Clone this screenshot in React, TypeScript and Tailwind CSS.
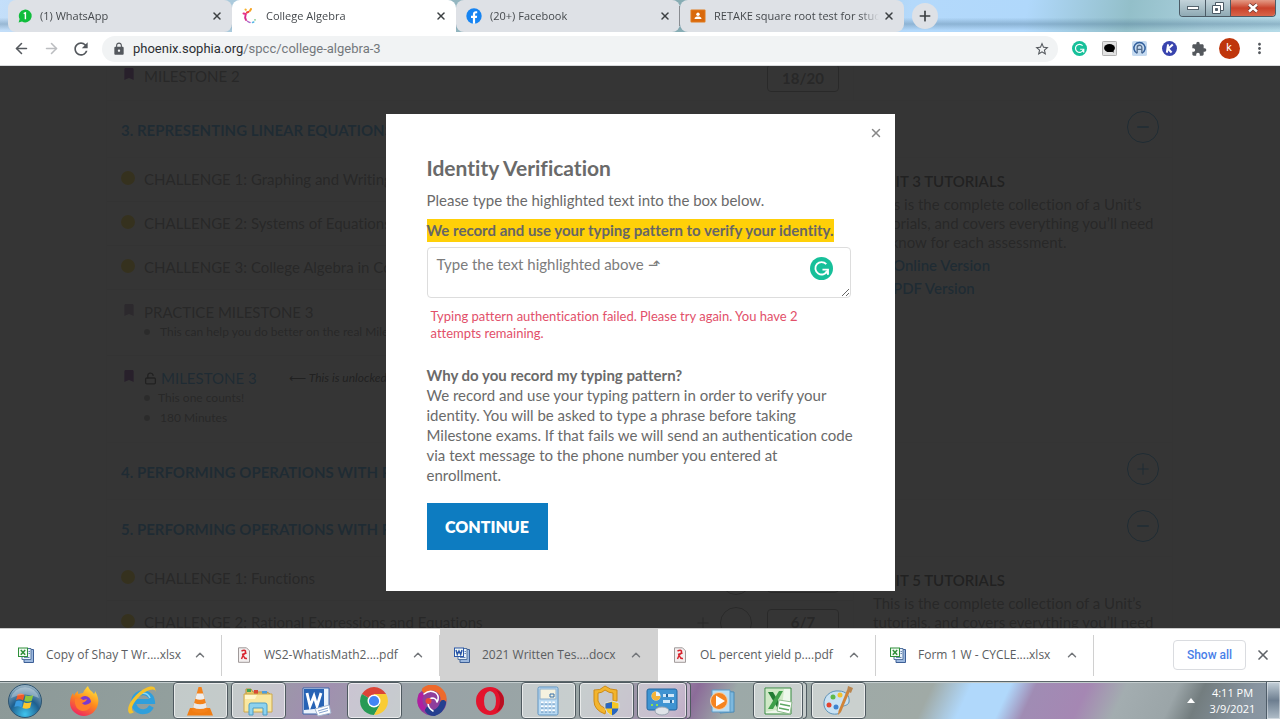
import type { ReactNode } from 'react'
import { ArrowLeft, ArrowRight, ChevronUp, Minus, Plus, Unlock, X } from 'lucide-react'
import { MdBookmark, MdExtension, MdLock, MdMoreVert, MdRefresh, MdStarBorder } from 'react-icons/md'

interface Tab {
  title: string
  icon: ReactNode
  active?: boolean
}

interface Download {
  name: string
  kind: 'excel' | 'pdf' | 'word'
  active?: boolean
}

interface TaskItem {
  label: string
  icon: ReactNode
  open?: boolean
  stacked?: boolean
}

/* ---------- small icons ---------- */

const WhatsAppIcon = () => (
  <svg viewBox="0 0 14 14" className="size-3.5 shrink-0">
    <path d="M.6 13.4l1-3.4A6.4 6.4 0 1 1 4 12.5z" fill="#10bd3c" />
    <path d="M5.7 4.7L7.4 3.8v6.4" fill="none" stroke="#fff" strokeWidth="1.4" />
  </svg>
)

const SophiaIcon = () => (
  <svg viewBox="0 0 16 16" className="size-4 shrink-0" fill="none" strokeWidth="2" strokeLinecap="round">
    <path d="M3.500 1.500l.3.300" stroke="#f7b32b" />
    <path d="M9 1l-1 1.800" stroke="#f5a220" />
    <path d="M6.500 3.800L5 4.500" stroke="#ee4a3b" />
    <path d="M1.500 5.500L4 6" stroke="#e8308a" />
    <path d="M3.500 7.500Q2.500 10 4 12" stroke="#d82a8c" />
    <path d="M5.500 13.200Q7 14.500 8 14.500" stroke="#b06ac8" strokeWidth="1.500" />
    <path d="M10.500 14.500L11.800 14" stroke="#56b7e6" strokeWidth="1.500" />
    <path d="M13 12v-.3" stroke="#6fc17a" strokeWidth="1.500" />
  </svg>
)

const FacebookIcon = () => (
  <svg viewBox="0 0 16 16" className="size-4 shrink-0">
    <circle cx="8" cy="8" r="7.700" fill="#1684f2" />
    <path d="M6.900 15.700V10H5V7.800h1.900V6.200c0-2 1.200-3 2.900-3 .8 0 1.400.1 1.400.1v1.900h-.9c-.9 0-1.200.5-1.200 1.100v1.500h2.100L10.800 10H9.100v5.700z" fill="#fff" />
  </svg>
)

const ClassroomIcon = () => (
  <svg viewBox="0 0 16 16" className="size-4 shrink-0">
    <rect x=".5" y="1.500" width="15" height="13" rx="1" fill="#e07b1c" />
    <rect x="1.500" y="2.500" width="13" height="11" fill="#d9690c" />
    <circle cx="8" cy="6.300" r="1.700" fill="#fff" />
    <path d="M4.500 11c0-2 2-2.500 3.500-2.500s3.500.5 3.500 2.500z" fill="#fff" />
  </svg>
)

const GrammarlyIcon = ({ className }: { className: string }) => (
  <svg viewBox="0 0 24 24" className={className}>
    <circle cx="12" cy="12" r="12" fill="#17c09a" />
    <path d="M17 7.500A6.500 6.500 0 1 0 18 14.500" fill="none" stroke="#fff" strokeWidth="1.900" />
    <path d="M13 13.200h5.800V18.500" fill="none" stroke="#fff" strokeWidth="1.900" />
    <path d="M18.800 13.200v5.500l-3-3z" fill="#fff" />
  </svg>
)

const FileIcon = ({ kind }: { kind: Download['kind'] }) => {
  if (kind === 'pdf') {
    return (
      <svg viewBox="0 0 16 16" className="size-4 shrink-0">
        <path d="M2.500.8h8l3 3v11.500h-11z" fill="#f3efef" stroke="#a09a9a" />
        <path d="M5.500 4q3-1.500 4 0 .5 2-2.500 4.500L5.500 12M6 7.500l4.500-1.500M7.500 9q1 3 3.500 2.500" fill="none" stroke="#d8232e" strokeWidth="1.400" />
      </svg>
    )
  }
  const color = kind === 'excel' ? '#2f8f3a' : '#2b56a8'
  return (
    <svg viewBox="0 0 16 16" className="size-4 shrink-0">
      <path d="M6 2.500h9.500v13H6z" fill="#9cb8de" stroke="#3d5f96" />
      <path d="M4 1.500h9v11H4z" fill="#e8f1fb" stroke="#54749f" />
      <path d="M10.500 4.500h1.500M10.500 6.500h1.500M6 10.500h5.500" stroke="#6b88b5" />
      <rect x=".5" y="1" width="9" height="8.500" fill="#f4fbf4" stroke={color} />
      <path
        d={kind === 'excel' ? 'M2.800 3l4.400 4.800M7.200 3L2.800 7.800' : 'M2 3l1.300 4.500L5 4l1.700 3.500L8 3'}
        fill="none"
        stroke={color}
        strokeWidth="1.500"
      />
    </svg>
  )
}

/* ---------- taskbar icons ---------- */

const StartOrb = () => (
  <svg viewBox="0 0 36 36" className="size-9">
    <defs>
      <radialGradient id="orb" cx=".5" cy=".9" r=".9">
        <stop offset="0" stopColor="#3fc4ee" />
        <stop offset=".5" stopColor="#1f5f8f" />
        <stop offset="1" stopColor="#9fb7c6" />
      </radialGradient>
    </defs>
    <circle cx="18" cy="18" r="16.500" fill="url(#orb)" stroke="#2f5570" />
    <path d="M10.500 11.500c2.500-1.500 4.500-1 7 .3l-1.400 5.700c-2.400-1.300-4.500-1.600-7-.3z" fill="#ef5a28" />
    <path d="M18.600 12.200c2.500 1.200 5 1.200 7.600-.2l-1.400 5.700c-2.500 1.300-5 1.400-7.600.3z" fill="#8cc63e" />
    <path d="M8.800 18.400c2.500-1.300 4.500-1 7 .3l-1.400 5.700c-2.400-1.300-4.600-1.600-7-.3z" fill="#3a9be0" />
    <path d="M16.900 19.200c2.500 1.200 5 1.200 7.600-.2l-1.400 5.700c-2.500 1.300-5 1.400-7.600.3z" fill="#fcc72c" />
    <path d="M4 15a14.500 14.500 0 0 1 28 0Q18 8 4 15z" fill="#fff" opacity=".3" />
  </svg>
)

const FirefoxIcon = () => (
  <svg viewBox="0 0 32 32" className="size-8">
    <defs>
      <linearGradient id="fx" x1=".8" y1="0" x2=".3" y2="1">
        <stop offset="0" stopColor="#ffe83e" />
        <stop offset=".5" stopColor="#ff8a1c" />
        <stop offset="1" stopColor="#ee2462" />
      </linearGradient>
    </defs>
    <path d="M20 1c1 4 4 5 6 8 1-1 1-2 1-3 3 5 4 9 3 13-1.500 7-7 12-14 12S2 25.500 2 18c0-4 1-7 3-10l1 3c1-3 3-4 4-5v3l5-1c1-3 3-5 5-7z" fill="url(#fx)" />
    <circle cx="17" cy="17" r="6" fill="#7a3ad0" />
    <path d="M7 14c4-2 6-1 8 1l4-1c-1 3-3 3-5 4 2 3 6 2 9-1 1 6-4 9-8 9-5 0-9-5-8-12z" fill="#ff7f2a" />
  </svg>
)

const ExplorerIcon = () => (
  <svg viewBox="0 0 32 32" className="size-8" fill="none">
    <path d="M25.500 21.500A9.500 9.500 0 1 1 26.500 16.500H10" stroke="#2f9fdc" strokeWidth="5" />
    <path d="M24 13A7.500 7.500 0 0 0 10 13" stroke="#8cd6f6" strokeWidth="1.500" />
    <path d="M3 28C-1 22 9 8 20 3c6-2.500 10-2 9.500 4C29 2 20 5 13 12 6 19 4 25 8 27c-2 1.500-4 2-5 1z" fill="#f5c22c" />
  </svg>
)

const VlcIcon = () => (
  <svg viewBox="0 0 32 32" className="size-8">
    <path d="M6 23h20l3 7.500H3z" fill="#f07c12" />
    <path d="M14.500 2h3L24 26q-8 4-16 0z" fill="#f4821a" />
    <path d="M12.800 8.500h6.400l1.500 5.300q-4.700 2-9.400 0z" fill="#eee" />
    <path d="M10.200 18q5.800 2.500 11.600 0l1.200 4.500q-7 3-14 0z" fill="#e9e9e9" />
  </svg>
)

const FolderIcon = () => (
  <svg viewBox="0 0 32 32" className="size-8">
    <path d="M4 4h5l2 3h14l3 2v17H4z" fill="#e8c766" stroke="#b8913a" />
    <path d="M5 4h4v3H5z" fill="#3fa352" />
    <path d="M12 5h4v4h-4z" fill="#d94a34" />
    <path d="M20 6h5v3h-5z" fill="#4a9de0" />
    <path d="M2 9h28v18H2z" fill="#f9e7a0" stroke="#cda84d" />
    <path d="M3 10h12l-2 4H3z" fill="#fff7ce" />
    <path d="M7 30V20q0-2 2-2h14q2 0 2 2v10h-4v-7H11v7z" fill="#8ed2ee" stroke="#4c9dc6" />
  </svg>
)

const WordIcon = () => (
  <svg viewBox="0 0 32 32" className="size-8">
    <path d="M3 3h26v26H3z" fill="#eaf2fc" stroke="#3a65ab" />
    <path d="M4 4h20v19L4 25z" fill="#2763b5" />
    <path d="M7 8l3 13 4-10 3 10 4-13" fill="none" stroke="#fff" strokeWidth="2.800" />
    <path d="M15 24l14-4 2 8-13 3z" fill="#fff" stroke="#a6b8d2" />
    <path d="M18 26l10-3M19 28l9-2.500" stroke="#86a3cf" />
  </svg>
)

const ChromeIcon = () => (
  <svg viewBox="0 0 32 32" className="size-8">
    <path d="M16 16L3.900 9A14 14 0 0 1 28.100 9H16z" fill="#db4437" />
    <path d="M16 16l6.100 3.500L16 30A14 14 0 0 1 3.900 9z" fill="#279a55" />
    <path d="M16 16V9h12.100A14 14 0 0 1 16 30l6.100-10.500z" fill="#f9cc35" />
    <circle cx="16" cy="16" r="6.500" fill="#fff" />
    <circle cx="16" cy="16" r="5.100" fill="#4285f4" />
  </svg>
)

const SwirlIcon = () => (
  <svg viewBox="0 0 32 32" className="size-8" fill="none" strokeLinecap="round">
    <circle cx="16" cy="16" r="14.500" fill="#8f3f9c" />
    <path d="M9 5Q16 0 23 5q6 5 4 12" stroke="#ee6a2c" strokeWidth="6" />
    <path d="M27 18q-2 8-9 10-4 0-6-3" stroke="#25408f" strokeWidth="6" />
    <path d="M5 10q-3 8 2 13" stroke="#b01fa0" strokeWidth="5" />
    <path d="M8 9q6-5 12-1 4 4 1 9M21 17q-1-4-5-4-4 1-4 5 0 5 5 8" stroke="#fff" strokeWidth="1.500" />
    <circle cx="12.500" cy="16" r="3" fill="#e9473c" />
  </svg>
)

const OperaIcon = () => (
  <svg viewBox="0 0 32 32" className="size-8">
    <path
      fillRule="evenodd"
      d="M16 2a14 14 0 1 0 0 28 14 14 0 1 0 0-28zM16 6q6 1 6 10t-6 10q-6-1-6-10T16 6z"
      fill="#e3142d"
    />
    <path d="M22 5q4 4 4 11t-4 11q8-3 8-11T22 5z" fill="#b80f22" />
  </svg>
)

const CalculatorIcon = () => (
  <svg viewBox="0 0 32 32" className="size-8">
    <rect x="6" y="2" width="20" height="28" rx="1.500" fill="#b8d9f2" stroke="#5f93c0" />
    <rect x="8" y="4" width="16" height="10" fill="#f5f2df" stroke="#8fb0cc" />
    <path d="M18 9h4v3h-4z" fill="none" stroke="#356ea8" />
    <path d="M9 18h14M9 22h14M9 26h14" stroke="#fff" strokeWidth="3" strokeDasharray="2.500 1.300" />
    <path d="M9 19h14M9 23h14M9 27h14" stroke="#3f7cb4" strokeDasharray="2.500 1.300" />
  </svg>
)

const SecurityIcon = () => (
  <svg viewBox="0 0 32 32" className="size-8">
    <path
      d="M4 5q6 1 11-4 5 4 12 4v11h-4V8q-4 0-8-3-3 3-7 3v8q1 5 8 8l-1 5Q4 25 4 16z"
      fill="#f3b52e"
      stroke="#cf8a12"
    />
    <path d="M22 16l7 2v5q-1 5-7 8-6-3-7-8v-5z" fill="#f6c825" stroke="#d5dde6" />
    <path d="M22 17v6.500h-6.500v-5zM22 23.500h6.500q-1 4.500-6.500 7z" fill="#2765c1" />
  </svg>
)

const ControlPanelIcon = () => (
  <svg viewBox="0 0 32 32" className="size-8">
    <rect x="1" y="4" width="30" height="21" rx="2" fill="#3f94d2" stroke="#2467a0" />
    <circle cx="10" cy="11" r="4.500" fill="#e8f3fb" />
    <path d="M10 11V6.500A4.500 4.500 0 1 0 14.500 11z" fill="#f2b33a" />
    <path d="M17 9h11v3H17zM17 15h11v3H17z" fill="#cfe7f8" />
    <path d="M21 9v3M25 15v3" stroke="#2467a0" strokeWidth="2" />
    <path d="M5 20h2M10 20h2" stroke="#8fe04a" strokeWidth="2" />
    <ellipse cx="16" cy="26" rx="7" ry="4" fill="#dfe3e8" stroke="#99a4b0" />
  </svg>
)

const MediaPlayerIcon = () => (
  <svg viewBox="0 0 32 32" className="size-8">
    <path d="M14 6l14 1v20l-14 1z" fill="#7db8de" stroke="#4b8ab5" />
    <path d="M6 5h18v22H6z" fill="#b9def4" stroke="#5c9cc7" />
    <circle cx="13" cy="16" r="8.500" fill="#f58420" stroke="#f6d4ae" />
    <path d="M10 10.500l9 5.500-9 5.500z" fill="#fff" />
  </svg>
)

const ExcelIcon = () => (
  <svg viewBox="0 0 32 32" className="size-8">
    <path d="M3 3h26v26H3z" fill="#eef7ec" stroke="#348a3c" />
    <path d="M4 4h18l-2 20-16 3z" fill="#cfe9c6" />
    <path d="M6 7h5l10 17h-5z" fill="#217c33" />
    <path d="M17 6h4L11 24H6z" fill="#3fa04a" />
    <path d="M17 15l13 2-2 12-13-3z" fill="#fff" stroke="#8dbb8c" />
    <path d="M18 19l10 2M17 23l10 2" stroke="#5ea864" strokeWidth="1.500" />
  </svg>
)

const PaintIcon = () => (
  <svg viewBox="0 0 32 32" className="size-8">
    <path d="M2 20C1 11 9 5 17 6c7 0 11 5 10 11-1 4-5 3-7 5s0 6-5 7C8 30 3 26 2 20z" fill="#c9e2f3" stroke="#5d92b8" />
    <circle cx="7" cy="20" r="2.500" fill="#e4442f" />
    <circle cx="11" cy="12" r="2.500" fill="#5fb94b" />
    <circle cx="18" cy="10" r="2.500" fill="#f2c230" />
    <circle cx="14" cy="22" r="2.500" fill="#3e83d0" />
    <path d="M28 6l-9 21-3 3 .5-4L25 5z" fill="#d08439" />
    <path d="M25 6l1-5 5 2-2 5z" fill="#b98650" />
  </svg>
)

/* ---------- data ---------- */

const tabs: Tab[] = [
  { title: '(1) WhatsApp', icon: <WhatsAppIcon /> },
  { title: 'College Algebra', icon: <SophiaIcon />, active: true },
  { title: '(20+) Facebook', icon: <FacebookIcon /> },
  { title: 'RETAKE square root test for students', icon: <ClassroomIcon /> },
]

const downloads: Download[] = [
  { name: 'Copy of Shay T Wr....xlsx', kind: 'excel' },
  { name: 'WS2-WhatisMath2....pdf', kind: 'pdf' },
  { name: '2021 Written Tes....docx', kind: 'word', active: true },
  { name: 'OL percent yield p....pdf', kind: 'pdf' },
  { name: 'Form 1 W - CYCLE....xlsx', kind: 'excel' },
]

const taskItems: TaskItem[] = [
  { label: 'Firefox', icon: <FirefoxIcon /> },
  { label: 'Internet Explorer', icon: <ExplorerIcon /> },
  { label: 'VLC', icon: <VlcIcon />, open: true },
  { label: 'File Explorer', icon: <FolderIcon />, open: true },
  { label: 'Word', icon: <WordIcon /> },
  { label: 'Chrome', icon: <ChromeIcon />, open: true },
  { label: 'Browser', icon: <SwirlIcon /> },
  { label: 'Opera', icon: <OperaIcon /> },
  { label: 'Calculator', icon: <CalculatorIcon />, open: true },
  { label: 'Security', icon: <SecurityIcon />, open: true },
  { label: 'Control Panel', icon: <ControlPanelIcon />, open: true, stacked: true },
  { label: 'Media Player', icon: <MediaPlayerIcon /> },
  { label: 'Excel', icon: <ExcelIcon />, open: true, stacked: true },
  { label: 'Paint', icon: <PaintIcon />, open: true },
]

/* ---------- browser chrome ---------- */

function TabStrip() {
  return (
    <div className="flex h-8 shrink-0 bg-[linear-gradient(180deg,transparent_55%,rgba(70,110,140,.35)_75%,transparent_95%),linear-gradient(100deg,#c4dffa_0%,#7fa5a8_50%,#b4d9fb_71%,#b0d8fb_80%,#93bfc9_88%,#a9cfdc_94%,#b5dbe8_100%)] pl-2">
      <div className="flex min-w-0">
        {tabs.map((tab, i) => (
          <div
            key={tab.title}
            className={`relative flex w-56 items-center rounded-t-lg pr-[9px] pl-2.5 ${tab.active ? 'bg-white' : 'rounded-b-lg bg-[#dee1e6]'}`}
          >
            {tab.icon}
            <span className="ml-2 flex-1 overflow-hidden text-[11px] whitespace-nowrap text-[#45494d] [mask-image:linear-gradient(90deg,#000_88%,transparent)]">
              {tab.title}
            </span>
            <button aria-label={`Close ${tab.title}`} className="ml-1 text-[#3c4043]">
              <X size={12} strokeWidth={3} />
            </button>
            {i === 2 && <span className="absolute right-0 h-5 w-px bg-[#888c91]" />}
          </div>
        ))}
      </div>
      <button aria-label="New tab" className="mt-[3px] ml-2 flex size-[26px] items-center justify-center rounded-full bg-[#dee1e6] text-[#3c4043]">
        <Plus size={16} strokeWidth={2.500} />
      </button>
      <div className="mr-1 ml-auto flex h-[17px] overflow-hidden rounded-b border border-t-0 border-[#4c5b66]">
        <button aria-label="Minimize" className="flex w-[26px] items-center justify-center border-r border-[#4c5b66] bg-linear-to-b from-[#c3d3da] to-[#8faab4]">
          <span className="h-1 w-3 border border-[#55636d] bg-white" />
        </button>
        <button aria-label="Restore" className="flex w-[25px] items-center justify-center border-r border-[#4c5b66] bg-linear-to-b from-[#c3d3da] to-[#8faab4]">
          <svg viewBox="0 0 12 12" className="size-3" fill="#fff" stroke="#4c5b66">
            <path d="M3.500.5h8v8h-8z" />
            <path d="M.5 3.500h8v8h-8z" />
            <path d="M3.500 6.500h2v2h-2z" fill="#4c5b66" />
          </svg>
        </button>
        <button aria-label="Close window" className="flex w-11 items-center justify-center bg-linear-to-b from-[#e39a86] via-[#c9412a] to-[#d8654a]">
          <svg viewBox="0 0 12 10" className="h-2.5 w-3">
            <path d="M2 1.500l8 7M10 1.500l-8 7" stroke="#6e3a34" strokeWidth="4" />
            <path d="M2 1.500l8 7M10 1.500l-8 7" stroke="#fff" strokeWidth="2.400" />
          </svg>
        </button>
      </div>
    </div>
  )
}

function Toolbar() {
  return (
    <div className="flex h-[34px] shrink-0 items-center border-b border-[#d8dadc] bg-white px-1.5 text-[#54585d]">
      <button aria-label="Back" className="flex w-[30px] justify-center"><ArrowLeft size={17} strokeWidth={2.200} /></button>
      <button aria-label="Forward" className="flex w-[30px] justify-center text-[#bbbdc0]"><ArrowRight size={17} strokeWidth={2.200} /></button>
      <button aria-label="Reload" className="flex w-[30px] justify-center"><MdRefresh size={20} /></button>
      <div className="ml-1.5 flex h-[26px] flex-1 items-center rounded-full bg-[#f1f3f4] pr-2 pl-2.5">
        <MdLock size={14} className="shrink-0" />
        <p className="ml-[7px] flex-1 font-[Roboto] text-[13px] text-[#74787c]">
          <span className="text-[#2c2f33]">phoenix.sophia.org</span>/spcc/college-algebra-3
        </p>
        <button aria-label="Bookmark"><MdStarBorder size={16} /></button>
      </div>
      <div className="ml-1.5 flex items-center">
        <button aria-label="Grammarly" className="flex w-[30px] justify-center"><GrammarlyIcon className="size-[15px]" /></button>
        <button aria-label="Chat extension" className="flex w-[30px] justify-center">
          <svg viewBox="0 0 16 16" className="size-[15px]">
            <rect x=".5" y=".5" width="15" height="15" rx="1" fill="#e2e2e2" stroke="#aaa" />
            <ellipse cx="8" cy="7.500" rx="5.800" ry="4.300" />
            <path d="M9 10l3.500 2.500-.5-4z" />
          </svg>
        </button>
        <button aria-label="Reader extension" className="flex w-[30px] justify-center">
          <svg viewBox="0 0 16 16" className="size-[15px]">
            <rect width="16" height="16" rx="2" fill="#c5daf0" />
            <path d="M5.500 13A6 6 0 1 1 10.500 13" fill="none" stroke="#2e5c9a" strokeWidth="1.600" />
            <path d="M5.500 13V7a2.500 2.500 0 0 1 5 0v6M5.500 9h5" fill="none" stroke="#526b8c" strokeWidth="1.400" />
          </svg>
        </button>
        <button aria-label="Kami" className="flex w-[30px] justify-center">
          <svg viewBox="0 0 16 16" className="size-[15px]">
            <circle cx="8" cy="8" r="8" fill="#3944ae" />
            <path d="M6.500 3.500l-1.300 9M11.500 3.800L6.500 8.300l3.700 4" fill="none" stroke="#fff" strokeWidth="2.200" />
          </svg>
        </button>
        <button aria-label="Extensions" className="flex w-[30px] justify-center"><MdExtension size={16} /></button>
        <button aria-label="Profile" className="flex w-[30px] justify-center">
          <span className="flex size-[21px] items-center justify-center rounded-full bg-[#bf360c] font-[Roboto] text-[11px] text-white">k</span>
        </button>
        <button aria-label="Menu" className="flex w-[30px] justify-center"><MdMoreVert size={17} /></button>
      </div>
    </div>
  )
}

/* ---------- course page ---------- */

const Dot = () => <span className="mb-1 size-3.5 shrink-0 rounded-full bg-[#ffd21c]" />

const Score = ({ value }: { value: string }) => (
  <span className="flex h-7 w-[72px] items-center justify-center rounded border border-[#888] font-bold text-[#777]">
    {value}
  </span>
)

function SectionHeader({ title, open }: { title: string; open?: boolean }) {
  return (
    <div className="flex h-[57px] items-center justify-between border-b border-[#eee] pr-[13px] pl-3.5">
      <h2 className="pt-0.5 font-bold whitespace-nowrap text-[#1f9be8]">{title}</h2>
      <button aria-label={`Toggle ${title}`} className="mb-1 flex size-8 items-center justify-center rounded-full border border-[#1f9be8] text-[#1f9be8]">
        {open ? <Minus size={18} strokeWidth={2} /> : <Plus size={18} strokeWidth={1.500} />}
      </button>
    </div>
  )
}

function Challenge({ title, score }: { title: string; score: string }) {
  return (
    <div className="flex h-11 items-center border-b border-[#e4e4e4] px-3.5">
      <Dot />
      <span className="ml-[9px] flex-1 whitespace-nowrap">{title}</span>
      <Plus size={18} strokeWidth={1.500} className="text-[#888]" />
      <span className="mr-[15px] ml-2 size-8 rounded-full border border-[#888]" />
      <Score value={score} />
    </div>
  )
}

function Tutorials({ unit }: { unit: number }) {
  return (
    <aside className="w-[319px] shrink-0 border-l border-[#eee] pt-3.5 pl-[19px] leading-[19px]">
      <h3 className="font-semibold text-[#333]">UNIT {unit} TUTORIALS</h3>
      <p className="mt-1">
        This is the complete collection of a Unit’s
        <br />
        tutorials, and covers everything you’ll need
        <br />
        to know for each assessment.
      </p>
      <ul className="mt-1 space-y-1 pl-5 font-semibold text-[#1f9be8]">
        <li><a href="#online">Online Version</a></li>
        <li><a href="#pdf">PDF Version</a></li>
      </ul>
    </aside>
  )
}

const Bullet = () => <span className="size-1.5 rounded-full bg-[#999]" />

function CoursePage() {
  return (
    <div className="mr-[107px] ml-[106px] -mt-2.5 border-x border-[#eee] text-[15px] text-[#777]">
      <div className="flex border-b border-[#eee]">
        <div className="flex h-11 flex-1 items-center px-3.5">
          <MdBookmark size={16} className="mb-2 text-[#7a2f9c]" />
          <span className="mb-1 ml-[7px] flex-1">MILESTONE 2</span>
          <Score value="18/20" />
        </div>
        <div className="w-[319px] border-l border-[#eee]" />
      </div>

      <SectionHeader title="3. REPRESENTING LINEAR EQUATIONS" open />
      <div className="flex border-b border-[#eee]">
        <div className="min-w-0 flex-1">
          <Challenge title="CHALLENGE 1: Graphing and Writing" score="6/7" />
          <Challenge title="CHALLENGE 2: Systems of Equations" score="6/7" />
          <Challenge title="CHALLENGE 3: College Algebra in Context" score="6/7" />
          <div className="flex h-[66px] border-b border-[#e4e4e4] pt-3 pl-3.5">
            <MdBookmark size={16} className="text-[#9f86ad]" />
            <div className="ml-[7px]">
              <p className="leading-5">PRACTICE MILESTONE 3</p>
              <p className="flex items-center gap-2.5 text-xs leading-5"><Bullet />This can help you do better on the real Milestone</p>
            </div>
          </div>
          <div className="flex h-[86px] pt-3 pl-3.5">
            <MdBookmark size={16} className="text-[#7a2f9c]" />
            <div className="ml-[7px]">
              <p className="flex items-center leading-5">
                <Unlock size={13} strokeWidth={2.500} className="mr-1 text-[#333]" />
                <a href="#milestone" className="text-[#1f9be8]">MILESTONE 3</a>
                <span className="ml-8 text-xs text-[#333]">⟵ <i>This is unlocked!</i></span>
              </p>
              <p className="flex items-center gap-2 text-xs leading-5"><Bullet />This one counts!</p>
              <p className="flex items-center gap-2.5 text-xs leading-5"><Bullet />180 Minutes</p>
            </div>
          </div>
        </div>
        <Tutorials unit={3} />
      </div>

      <SectionHeader title="4. PERFORMING OPERATIONS WITH POLYNOMIALS" />
      <SectionHeader title="5. PERFORMING OPERATIONS WITH FUNCTIONS" open />
      <div className="flex">
        <div className="min-w-0 flex-1">
          <Challenge title="CHALLENGE 1: Functions" score="6/7" />
          <Challenge title="CHALLENGE 2: Rational Expressions and Equations" score="6/7" />
        </div>
        <Tutorials unit={5} />
      </div>
    </div>
  )
}

function IdentityDialog() {
  return (
    <div
      role="dialog"
      aria-labelledby="identity-title"
      className="relative mt-12 w-[509px] bg-white pt-[42px] pr-11 pb-[41px] pl-[41px] text-[15px] leading-5 text-[#6a6a6a]"
    >
      <button aria-label="Close" className="absolute top-3 right-3 text-[#888]">
        <X size={14} strokeWidth={2.500} />
      </button>
      <h1 id="identity-title" className="text-[21px] leading-6 font-bold">Identity Verification</h1>
      <label htmlFor="phrase" className="mt-2.5 block">Please type the highlighted text into the box below.</label>
      <p className="mt-[9px]">
        <mark className="inline-block bg-[#ffd008] leading-[23px] font-bold text-[#666]">
          We record and use your typing pattern to verify your identity.
        </mark>
      </p>
      <div className="relative mt-[5px]">
        <textarea
          id="phrase"
          placeholder="Type the text highlighted above ⬏"
          className="block h-[51px] w-full rounded border border-[#ddd] px-[9px] py-1.5 placeholder:text-[#7c7c7c]"
        />
        <GrammarlyIcon className="absolute top-2.5 right-[18px] size-[23px]" />
      </div>
      <p className="mt-2.5 px-1 text-[13px] leading-[17px] text-[#e2506a]">
        Typing pattern authentication failed. Please try again. You have 2 attempts remaining.
      </p>
      <h2 className="mt-[23px] font-bold">Why do you record my typing pattern?</h2>
      <p className="-mr-1">
        We record and use your typing pattern in order to verify your identity. You will be asked to type a phrase
        before taking Milestone exams. If that fails we will send an authentication code via text message to the phone
        number you entered at enrollment.
      </p>
      <button className="mt-[18px] h-[47px] w-[121px] bg-[#0d7cc1] text-base font-extrabold text-white">CONTINUE</button>
    </div>
  )
}

/* ---------- bottom bars ---------- */

function DownloadBar() {
  return (
    <div className="flex h-[53px] shrink-0 items-center border-t border-[#ccc] bg-white pl-1 text-xs text-[#5a5d61]">
      {downloads.map((file) => (
        <div key={file.name} className={`flex h-full w-[218px] items-center ${file.active ? 'bg-[#d2d2d2]' : ''}`}>
          <button className="flex min-w-0 flex-1 items-center gap-3 pl-3.5 whitespace-nowrap">
            <FileIcon kind={file.kind} />
            {file.name}
          </button>
          <button aria-label={`Options for ${file.name}`} className="mr-3.5 text-[#74777b]">
            <ChevronUp size={14} strokeWidth={2.500} />
          </button>
          <span className={`h-[41px] w-px ${file.active ? '' : 'bg-[#d0d0d0]'}`} />
        </div>
      ))}
      <button className="mr-[9px] ml-auto h-[30px] w-[73px] rounded border border-[#dadce0] font-[Roboto] font-medium text-[#4a7fe8]">Show all</button>
      <button aria-label="Close downloads" className="mr-[9px] text-[#5f6368]"><X size={16} strokeWidth={2.500} /></button>
    </div>
  )
}

function Taskbar() {
  return (
    <div className="flex h-[38px] shrink-0 items-center border-t border-[#5b676b] bg-[linear-gradient(115deg,#8c9998_0%,#94a19f_18%,#a18fb0_25%,#98a2a6_32%,#9aa6a6_45%,#9c8aa8_52%,#8c6c99_54%,#9ca9a8_57%,#a0aaa6_72%,#b0d8fb_75%,#b0d8fb_78%,#a08cb4_80%,#a587b3_84%,#a3adb0_87%,#9ba5a8_91%,#737d7f_93%,#8794a0_97%,#8b97a3_100%)] shadow-[inset_0_1px_0_#c3cccd]">
      <button aria-label="Start" className="flex w-[55px] items-center justify-start pl-[7px]"><StartOrb /></button>
      {taskItems.map((item) => (
        <div key={item.label} className="flex h-full w-[58px] items-center justify-center">
          <button
            aria-label={item.label}
            className={`flex h-full items-center justify-center ${item.stacked ? 'w-[50px]' : 'w-[55px]'} ${item.open ? 'rounded-sm border border-[#4f5a60] bg-white/45 shadow-[inset_0_0_0_1px_rgba(255,255,255,.6)]' : ''}`}
          >
            {item.icon}
          </button>
          {item.stacked && <span className="h-full w-1 rounded-r-sm border border-l-0 border-[#4f5a60] bg-white/40" />}
        </div>
      ))}
      <button aria-label="Show hidden icons" className="ml-auto">
        <svg viewBox="0 0 8 5" className="h-[5px] w-2"><path d="M4 0l4 5H0z" fill="#fff" /></svg>
      </button>
      <p className="w-[71px] pl-1 text-center text-[11px] leading-4 text-white">
        4:11 PM
        <br />
        3/9/2021
      </p>
      <button aria-label="Show desktop" className="h-full w-[14px] border-l border-[#4e5c68] bg-linear-to-b from-[#c4d0d8] via-[#6d7e90] to-[#b1bec9] shadow-[inset_0_0_0_1px_rgba(255,255,255,.4)]" />
    </div>
  )
}

export default function App() {
  return (
    <div className="flex h-screen flex-col overflow-hidden font-['Open_Sans',sans-serif]">
      <TabStrip />
      <Toolbar />
      <main className="relative min-h-0 flex-1 overflow-hidden bg-white font-[Lato,sans-serif] [font-variant-ligatures:none]">
        <CoursePage />
        <div className="absolute inset-0 flex items-start justify-center bg-[#1f1f1f]/90">
          <IdentityDialog />
        </div>
      </main>
      <DownloadBar />
      <Taskbar />
    </div>
  )
}
